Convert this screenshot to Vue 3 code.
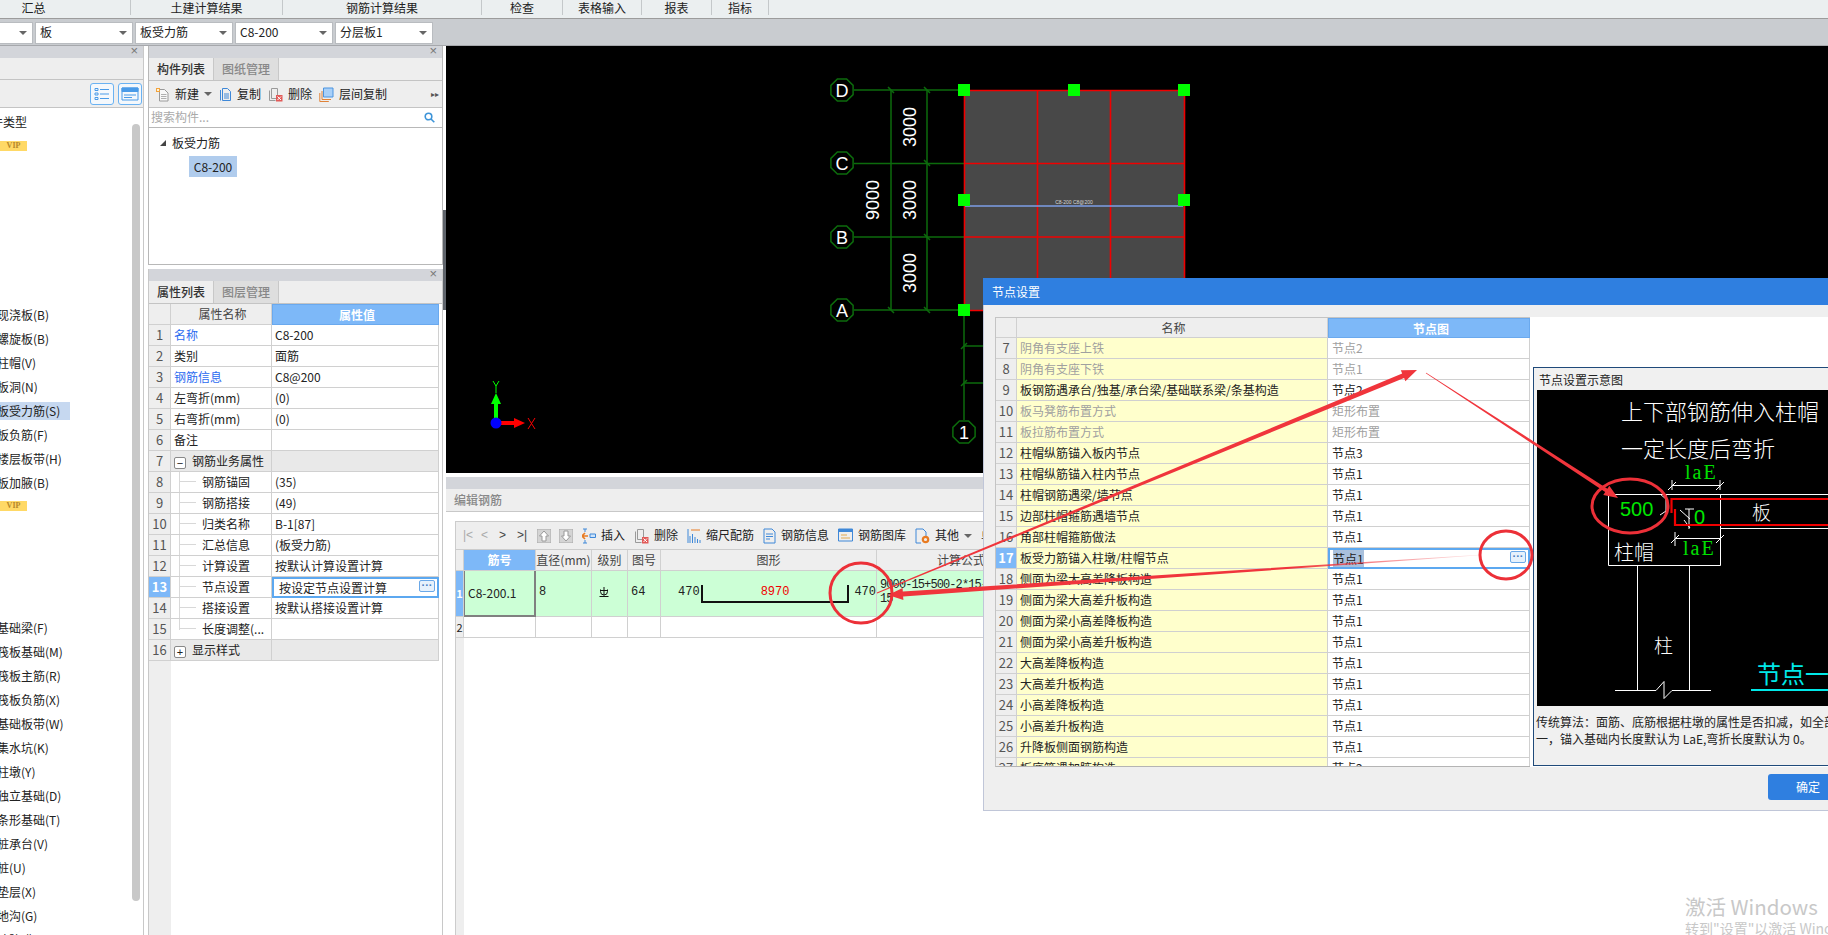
<template>
  <div class="app">
    <!-- 顶部菜单 -->
    <div class="menu-bar">
      <div v-for="m in menus" :key="m.label" class="menu-item" :style="{ width: m.w + 'px' }">{{ m.label }}</div>
    </div>

    <!-- 下拉框 -->
    <div class="combo-bar">
      <div v-for="c in combos" :key="c" class="combo">
        <span>{{ c }}</span><i class="caret"></i>
      </div>
    </div>

    <div class="workspace">
      <!-- 左侧导航树 -->
      <aside class="left-panel">
        <div class="panel-head"><span class="close">×</span></div>
        <div class="left-blank"></div>
        <div class="left-tools">
          <button class="view-btn">
            <svg width="16" height="14" viewBox="0 0 16 14" fill="none" stroke="#4a9be8">
              <path d="M1 1.5h3v2H1zM1 6h3v2H1zM1 10.500h3v2H1zM6 2.500h9M6 7h9M6 11.500h9" />
            </svg>
          </button>
          <button class="view-btn">
            <svg width="18" height="14" viewBox="0 0 18 14" fill="none" stroke="#4a9be8">
              <path d="M1 1h16v12H1z" /><path d="M1 1h16v3.500H1z" fill="#4a9be8" /><path d="M3 8h12M3 10.500h8" />
            </svg>
          </button>
        </div>
        <div class="left-list">
          <div class="nav-head">构件类型</div>
          <div class="vip">VIP</div>
          <div class="nav-group first">
            <div v-for="n in navSlab" :key="n" class="nav-item" :class="{ on: n === '板受力筋(S)' }">{{ n }}</div>
            <div class="vip inner">VIP</div>
          </div>
          <div class="nav-group second">
            <div v-for="n in navBase" :key="n" class="nav-item">{{ n }}</div>
          </div>
          <div class="scroll-thumb"></div>
        </div>
      </aside>

      <div class="mid-col">
        <!-- 构件列表 -->
        <section class="side-panel comp-panel">
          <div class="panel-head"><span class="close">×</span></div>
          <div class="tabs">
            <div class="tab on">构件列表</div>
            <div class="tab">图纸管理</div>
          </div>
          <div class="comp-tools">
            <span class="tool">
              <svg width="15" height="15" viewBox="0 0 15 15" fill="none"><path d="M4.500 2.500h5l3.500 3.500v8h-8.500z" stroke="#9a9a9a" fill="#f8f8f8" /><path d="M6 7.500h5.500M6 9.500h5.500M6 11.500h5.500" stroke="#b0b0b0" /><path d="M1 1h4v4H1z" fill="#f2a33c" /><path d="M2 2h2v2H2z" fill="#fff3d8" /></svg>
              新建<i class="caret small"></i>
            </span>
            <span class="tool">
              <svg width="13" height="15" viewBox="0 0 13 15" fill="none" stroke="#3f88d8"><path d="M3.500 1.500h5l3 3v9h-8z" /><path d="M1.500 3v10.500M5 7h5M5 9h5M5 11h5" /></svg>
              复制
            </span>
            <span class="tool">
              <svg width="15" height="15" viewBox="0 0 15 15" fill="none"><path d="M3.500 1.500h6v10h-6z M1.500 3.500v10h6" stroke="#9a9a9a" /><path d="M8 8h6.500v6.500H8z" fill="#e25a58" /><path d="M9.500 9.500l3.500 3.500M13 9.500l-3.500 3.500" stroke="#fff" /></svg>
              删除
            </span>
            <span class="tool">
              <svg width="15" height="15" viewBox="0 0 15 15" fill="none"><path d="M4.500 1h9.500v9H4.500z" fill="#a9d0f8" stroke="#4a94e0" /><path d="M3 4v8.500h9M.8 6v8.500h9" stroke="#e08238" /></svg>
              层间复制
            </span>
            <span class="more">▸▸</span>
          </div>
          <div class="search">
            <span>搜索构件...</span>
            <svg width="11" height="11" viewBox="0 0 11 11" fill="none" stroke="#3d94d8" stroke-width="1.600"><circle cx="4.500" cy="4.500" r="3.300" /><path d="M7 7l3.300 3.300" /></svg>
          </div>
          <div class="comp-tree">
            <div class="tree-root"><i class="tree-arrow"></i>板受力筋</div>
            <div class="tree-leaf">C8-200</div>
          </div>
        </section>

        <!-- 属性列表 -->
        <section class="side-panel prop-panel">
          <div class="panel-head"><span class="close">×</span></div>
          <div class="tabs">
            <div class="tab on">属性列表</div>
            <div class="tab">图层管理</div>
          </div>
          <div class="prop-row prop-top">
            <div class="p-num"></div>
            <div class="p-name head">属性名称</div>
            <div class="p-val head active">属性值</div>
          </div>
          <div v-for="(r, i) in props" :key="i" class="prop-row" :class="{ group: r.group }">
            <div class="p-num" :class="{ active: r.active }">{{ i + 1 }}</div>
            <div class="p-name" :class="{ link: r.link, sub: r.sub, last: i === 14 }">
              <i v-if="r.group" class="box">{{ r.group }}</i>{{ r.name }}
            </div>
            <div class="p-val" :class="{ editing: r.active }">
              {{ r.val }}
              <i v-if="r.active" class="dots">···</i>
            </div>
          </div>
          <div class="prop-rest"><div class="p-num"></div></div>
        </section>
      </div>

      <div class="splitter"><i></i></div>

      <main class="right-col">
        <!-- CAD 画布 -->
        <svg class="canvas" viewBox="446 46 1382 427" width="1382" height="427" font-family="Liberation Sans, sans-serif">
          <rect x="964" y="90" width="220" height="220" fill="#484848" />
          <g stroke="#0c6b0c" stroke-width="1.500" fill="none">
            <path d="M854 90h110M854 163.500h110M854 237h110M854 310h110M891 90v220M927 90v220M964 310v110M964 346h20M964 383h20" />
            <path d="M888 87l6 6M924 87l6 6M924 160l6 6M924 234l6 6M888 307l6 6M924 307l6 6M961 349l6-6M961 386l6-6" />
            <polygon v-for="a in axes" :key="a.t" :points="octagon(a.x, a.y, 12)" />
          </g>
          <g fill="#fff" font-size="18" text-anchor="middle">
            <text v-for="a in axes" :key="a.t" :x="a.x" :y="a.y + 6.500">{{ a.t }}</text>
            <text v-for="d in dims" :key="d.y + d.t" :transform="'translate(' + d.x + ' ' + d.y + ') rotate(-90)'">{{ d.t }}</text>
          </g>
          <path d="M964.500 90.500h220v220h-220zM964.500 163.500h220M964.500 237h220M1037.500 90v220M1110.500 90v220" fill="none" stroke="#f00000" stroke-width="1.600" />
          <path d="M965 206h218" stroke="#7d9ee6" stroke-width="1.500" />
          <text x="1074" y="204" fill="#d8d8d8" font-size="5" text-anchor="middle">C8-200 C8@200</text>
          <rect v-for="h in handles" :key="h[0] + '-' + h[1]" :x="h[0] - 6" :y="h[1] - 6" width="12" height="12" fill="#00ff00" />
          <!-- 坐标轴 -->
          <path d="M496 423v-24" stroke="#00ff00" stroke-width="4" />
          <path d="M496 393l5 11h-10z" fill="#00ff00" />
          <path d="M496 423h22" stroke="#ff0000" stroke-width="4" />
          <path d="M525 423l-11 5v-10z" fill="#ff0000" />
          <circle cx="496" cy="423" r="5.500" fill="#0000ff" />
          <path d="M493 381l3 5 3-5M496 386v7" stroke="#00ff00" fill="none" />
          <path d="M528 418l7 11M535 418l-7 11" stroke="#ff0000" fill="none" />
        </svg>

        <!-- 编辑钢筋 -->
        <section class="edit-panel">
          <div class="panel-head"></div>
          <div class="edit-title">编辑钢筋</div>
          <div class="edit-body">
            <div class="edit-tools">
              <span class="nav-ctl">|&lt;</span>
              <span class="nav-ctl">&lt;</span>
              <span class="nav-ctl dark">&gt;</span>
              <span class="nav-ctl dark">&gt;|</span>
              <svg class="t-up" width="14" height="14" viewBox="0 0 14 14"><rect width="14" height="14" fill="#d4d4d4" stroke="#aaa" /><path d="M7 2l4.500 5H9v5H5V7H2.500z" fill="#fff" stroke="#999" /></svg>
              <svg class="t-down" width="14" height="14" viewBox="0 0 14 14"><rect width="14" height="14" fill="#d4d4d4" stroke="#aaa" /><path d="M7 12l4.500-5H9V2H5v5H2.500z" fill="#fff" stroke="#999" /></svg>
              <span class="tool t-first">
                <svg width="14" height="16" viewBox="0 0 14 16" fill="none"><path d="M1 1h4M1 15h4M3 1v3M3 12v3" stroke="#3f88d8" /><path d="M0 8h6M3 5L0 8l3 3" stroke="#e87b22" stroke-width="1.600" /><path d="M8 6h5.500v3.500H8z" stroke="#3f88d8" fill="#cfe4fa" /></svg>
                插入
              </span>
              <span class="tool">
                <svg width="15" height="16" viewBox="0 0 15 16" fill="none"><path d="M3.500 1.500h6v10h-6z M1.500 3.500v11h6" stroke="#9a9a9a" /><path d="M8 9h6.500v6.500H8z" fill="#e25a58" /><path d="M9.500 10.500l3.500 3.500M13 10.500l-3.500 3.500" stroke="#fff" /></svg>
                删除
              </span>
              <span class="tool">
                <svg width="14" height="16" viewBox="0 0 14 16" fill="none" stroke="#3f88d8"><path d="M1 1v14M3 15V8M5.500 15V6M8 15V9M10.500 15v-4M13 15v-3" /><path d="M4 2h9" stroke="#e87b22" /></svg>
                缩尺配筋
              </span>
              <span class="tool">
                <svg width="13" height="16" viewBox="0 0 13 16" fill="none" stroke="#3f88d8"><path d="M1 1h8l3 3v11H1z" /><path d="M3 6h7M3 8.500h7M3 11h4" /></svg>
                钢筋信息
              </span>
              <span class="tool">
                <svg width="15" height="14" viewBox="0 0 15 14" fill="none"><path d="M.5 1h14v12H.5z" stroke="#3f88d8" /><path d="M.5 1h14v3H.5z" fill="#3f88d8" /><path d="M3 7h6M3 10h9" stroke="#e0a850" /></svg>
                钢筋图库
              </span>
              <span class="tool">
                <svg width="15" height="16" viewBox="0 0 15 16" fill="none"><path d="M1 1h7l3 3v5M6 15H1V1" stroke="#3f88d8" /><circle cx="10.500" cy="11.500" r="2.700" stroke="#e87b22" stroke-width="2.200" /></svg>
                其他<i class="caret small"></i>
              </span>
              <span class="tool cut">单</span>
            </div>
            <div class="rb-row rb-head">
              <div class="c-n"></div>
              <div class="c-id active">筋号</div>
              <div class="c-d">直径(mm)</div>
              <div class="c-g">级别</div>
              <div class="c-t">图号</div>
              <div class="c-s">图形</div>
              <div class="c-f center">计算公式</div>
            </div>
            <div class="rb-row rb-first">
              <div class="c-n active">1</div>
              <div class="c-id focus">C8-200.1</div>
              <div class="c-d top">8</div>
              <div class="c-g top grade-cell">
                <svg width="10" height="10" viewBox="0 0 10 10" fill="none" stroke="#111"><path d="M1.500 2.500v2a3.500 3.500 0 0 0 7 0v-2M5 0v8.500M.5 9.500h9M1.500 3.500h7" /></svg>
              </div>
              <div class="c-t top">64</div>
              <div class="c-s shape">
                <span class="len-l">470</span>
                <div class="bar"><span>8970</span></div>
                <span class="len-r">470</span>
              </div>
              <div class="c-f formula">9000-15+500-2*15-<br />15</div>
            </div>
            <div class="rb-row rb-empty">
              <div class="c-n">2</div>
              <div class="c-id"></div>
              <div class="c-d"></div>
              <div class="c-g"></div>
              <div class="c-t"></div>
              <div class="c-s"></div>
              <div class="c-f"></div>
            </div>
            <div class="rb-rest"></div>
          </div>
        </section>
      </main>
    </div>

    <!-- 节点设置弹窗 -->
    <div class="dialog">
      <div class="dlg-title">节点设置</div>
      <div class="dlg-main">
        <div class="node-table">
          <div class="node-row node-head">
            <div class="n-num"></div>
            <div class="n-name">名称</div>
            <div class="n-val active">节点图</div>
          </div>
          <div v-for="r in nodes" :key="r.no" class="node-row" :class="{ dim: r.dim }">
            <div class="n-num" :class="{ active: r.no === 17 }">{{ r.no }}</div>
            <div class="n-name">{{ r.name }}</div>
            <div class="n-val" :class="{ editing: r.no === 17 }">
              <span :class="{ sel: r.no === 17 }">{{ r.val }}</span>
              <i v-if="r.no === 17" class="dots">···</i>
            </div>
          </div>
        </div>
        <div class="dlg-right">
          <div class="preview">
            <div class="preview-title">节点设置示意图</div>
            <svg class="preview-img" viewBox="1537 390 291 316" width="291" height="316" font-family="Noto Sans CJK SC, sans-serif">
              <rect x="1537" y="390" width="291" height="316" fill="#000" />
              <g fill="#fff" font-size="22" font-weight="300">
                <text x="1621" y="420">上下部钢筋伸入柱帽</text>
                <text x="1621" y="457">一定长度后弯折</text>
                <text x="1752" y="520" font-size="19">板</text>
                <text x="1614" y="560" font-size="20">柱帽</text>
                <text x="1654" y="653" font-size="19">柱</text>
              </g>
              <g fill="#00e000" font-family="Liberation Serif, serif" font-size="20" letter-spacing="2">
                <text x="1685" y="479">laE</text>
                <text x="1683" y="555">laE</text>
              </g>
              <g fill="#00e800" font-family="Liberation Sans, sans-serif" font-size="20">
                <text x="1620" y="516">500</text>
                <text x="1694" y="524">0</text>
              </g>
              <g fill="none" stroke="#fff">
                <path d="M1608.500 494.500h219.500M1720.500 528.500h107.500M1608.500 494.500v71h112v-71M1637.500 565v125M1689.500 565v125M1615 690.500h41l8-9v17l8-8h39" />
                <path d="M1672 485.500h48M1672 480v10M1720 480v10M1668 490l8-8M1716 490l8-8M1675 538.500h45M1675 532v14M1671 543l8-8M1716 543l8-8" />
                <path d="M1666 494.500v20M1660 494l6 5 0 0M1660 515l6-4M1685 509h9M1689 509v20M1680 510l10 9M1684 520l6 8" />
              </g>
              <path d="M1671.500 513v-14h157M1675 509v16h153" fill="none" stroke="#f00000" stroke-width="2.200" />
              <g fill="#00e8e8" font-size="24">
                <text x="1757" y="683">节点一</text>
              </g>
              <path d="M1751 690h77" stroke="#00e8e8" stroke-width="2" />
            </svg>
            <p class="preview-note">传统算法：面筋、底筋根据柱墩的属性是否扣减，如全部<br />一，锚入基础内长度默认为 LaE,弯折长度默认为 0。</p>
          </div>
        </div>
      </div>
      <div class="dlg-foot"><button class="ok">确定</button></div>
    </div>

    <!-- 红色标注 -->
    <svg class="annot" viewBox="0 0 1828 935" width="1828" height="935">
      <defs>
        <linearGradient id="fade" gradientUnits="userSpaceOnUse" x1="1480" y1="0" x2="1290" y2="0">
          <stop offset="0" stop-color="#f0353c" stop-opacity="0.1" />
          <stop offset="1" stop-color="#f0353c" />
        </linearGradient>
      </defs>
      <polygon v-for="(a, i) in arrows" :key="i" :points="arrowPoints(a)" :fill="a.fade ? 'url(#fade)' : '#f0353c'" />
      <ellipse v-for="(c, i) in rings" :key="i" :cx="c[0]" :cy="c[1]" :rx="c[2]" :ry="c[3]" fill="none" stroke="#ec3038" stroke-width="3" />
    </svg>

    <div class="watermark">
      <div class="wm-1">激活 Windows</div>
      <div class="wm-2">转到"设置"以激活 Windows。</div>
    </div>
  </div>
</template>

<script setup>
const menus = [
  { label: '汇总', w: 194 },
  { label: '土建计算结果', w: 152 },
  { label: '钢筋计算结果', w: 199 },
  { label: '检查', w: 81 },
  { label: '表格输入', w: 79 },
  { label: '报表', w: 70 },
  { label: '指标', w: 57 }
]
const combos = ['首层', '板', '板受力筋', 'C8-200', '分层板1']

const navSlab = ['现浇板(B)', '螺旋板(B)', '柱帽(V)', '板洞(N)', '板受力筋(S)', '板负筋(F)', '楼层板带(H)', '板加腋(B)']
const navBase = ['基础梁(F)', '筏板基础(M)', '筏板主筋(R)', '筏板负筋(X)', '基础板带(W)', '集水坑(K)', '柱墩(Y)', '独立基础(D)', '条形基础(T)', '桩承台(V)', '桩(U)', '垫层(X)', '地沟(G)', '砖胎膜']

const props = [
  { name: '名称', val: 'C8-200', link: true },
  { name: '类别', val: '面筋' },
  { name: '钢筋信息', val: 'C8@200', link: true },
  { name: '左弯折(mm)', val: '(0)' },
  { name: '右弯折(mm)', val: '(0)' },
  { name: '备注', val: '' },
  { name: '钢筋业务属性', val: '', group: '−' },
  { name: '钢筋锚固', val: '(35)', sub: true },
  { name: '钢筋搭接', val: '(49)', sub: true },
  { name: '归类名称', val: 'B-1[87]', sub: true },
  { name: '汇总信息', val: '(板受力筋)', sub: true },
  { name: '计算设置', val: '按默认计算设置计算', sub: true },
  { name: '节点设置', val: '按设定节点设置计算', sub: true, active: true },
  { name: '搭接设置', val: '按默认搭接设置计算', sub: true },
  { name: '长度调整(...', val: '', sub: true },
  { name: '显示样式', val: '', group: '+' }
]

const nodeNames = [
  ['阴角有支座上铁', '节点2', 1],
  ['阴角有支座下铁', '节点1', 1],
  ['板钢筋遇承台/独基/承台梁/基础联系梁/条基构造', '节点2'],
  ['板马凳筋布置方式', '矩形布置', 1],
  ['板拉筋布置方式', '矩形布置', 1],
  ['柱帽纵筋锚入板内节点', '节点3'],
  ['柱帽纵筋锚入柱内节点', '节点1'],
  ['柱帽钢筋遇梁/墙节点', '节点1'],
  ['边部柱帽箍筋遇墙节点', '节点1'],
  ['角部柱帽箍筋做法', '节点1'],
  ['板受力筋锚入柱墩/柱帽节点', '节点1'],
  ['侧面为梁大高差降板构造', '节点1'],
  ['侧面为梁大高差升板构造', '节点1'],
  ['侧面为梁小高差降板构造', '节点1'],
  ['侧面为梁小高差升板构造', '节点1'],
  ['大高差降板构造', '节点1'],
  ['大高差升板构造', '节点1'],
  ['小高差降板构造', '节点1'],
  ['小高差升板构造', '节点1'],
  ['升降板侧面钢筋构造', '节点1'],
  ['板底筋遇加腋构造', '节点2']
]
const nodes = nodeNames.map((n, i) => ({ no: i + 7, name: n[0], val: n[1], dim: !!n[2] }))

const axes = [
  { t: 'D', x: 842, y: 90 },
  { t: 'C', x: 842, y: 163 },
  { t: 'B', x: 842, y: 237 },
  { t: 'A', x: 842, y: 310 },
  { t: '1', x: 964, y: 432 }
]
const dims = [
  { t: '9000', x: 879, y: 200 },
  { t: '3000', x: 916, y: 127 },
  { t: '3000', x: 916, y: 200 },
  { t: '3000', x: 916, y: 273 }
]
const handles = [[964, 90], [1074, 90], [1184, 90], [964, 200], [1184, 200], [964, 310]]

function octagon(cx, cy, r) {
  const pts = []
  for (let i = 0; i < 8; i++) {
    const a = Math.PI / 8 + (i * Math.PI) / 4
    pts.push((cx + r * Math.cos(a)).toFixed(1) + ',' + (cy + r * Math.sin(a)).toFixed(1))
  }
  return pts.join(' ')
}

// 从细到粗的手绘箭头
const arrows = [
  { from: [877, 593], to: [1417, 370], w0: 1, w1: 5, head: 15, hw: 6 },
  { from: [1480, 555], to: [888, 595], w0: 0.6, w1: 5, head: 15, hw: 6, fade: true },
  { from: [1426, 373], to: [1618, 498], w0: 0.8, w1: 4, head: 14, hw: 5.500 }
]
const rings = [
  [861, 593, 31, 30],
  [1506, 555, 26, 24],
  [1630, 506, 38, 27]
]

function arrowPoints(a) {
  const dx = a.to[0] - a.from[0]
  const dy = a.to[1] - a.from[1]
  const len = Math.hypot(dx, dy)
  const ux = dx / len
  const uy = dy / len
  const nx = -uy
  const ny = ux
  const bx = a.to[0] - ux * a.head
  const by = a.to[1] - uy * a.head
  const p = [
    [a.from[0] + (nx * a.w0) / 2, a.from[1] + (ny * a.w0) / 2],
    [bx + (nx * a.w1) / 2, by + (ny * a.w1) / 2],
    [bx + nx * a.hw, by + ny * a.hw],
    a.to,
    [bx - nx * a.hw, by - ny * a.hw],
    [bx - (nx * a.w1) / 2, by - (ny * a.w1) / 2],
    [a.from[0] - (nx * a.w0) / 2, a.from[1] - (ny * a.w0) / 2]
  ]
  return p.map(q => q[0].toFixed(1) + ',' + q[1].toFixed(1)).join(' ')
}
</script>

<style>
html, body { margin: 0; background: #fff; }
</style>

<style scoped>
* { box-sizing: border-box; }
.app {
  position: relative;
  width: 1828px;
  height: 935px;
  overflow: hidden;
  background: #fff;
  color: #222;
  font: 12px/1.2 "Noto Sans CJK SC", "Liberation Sans", sans-serif;
}
i { font-style: normal; }

/* ---- 菜单 ---- */
.menu-bar {
  display: flex;
  height: 19px;
  margin-left: -63px;
  background: #ebeff0;
  border-bottom: 1px solid #9c9c9c;
}
.menu-item {
  height: 15px;
  line-height: 15px;
  text-align: center;
  border-right: 1px solid #c4c8ca;
}

/* ---- 下拉框 ---- */
.combo-bar {
  display: flex;
  gap: 2px;
  height: 27px;
  padding-top: 2.500px;
  margin-left: -65px;
  background: #c9ccd0;
  border-bottom: 1px solid #a6a8ac;
}
.combo {
  display: flex;
  align-items: center;
  justify-content: space-between;
  width: 98px;
  height: 22px;
  padding: 0 5px 0 4px;
  background: #fff;
  border: 1px solid #b9bcc0;
}
.caret {
  width: 0;
  height: 0;
  border: 4px solid transparent;
  border-top: 4px solid #666;
  border-bottom: 0;
}
.caret.small { display: inline-block; margin-left: 0; vertical-align: 2px; }

.workspace {
  display: flex;
  height: 889px;
}

/* ---- 面板公共 ---- */
.panel-head {
  position: relative;
  height: 12px;
  background: #d3d5da;
}
.close {
  position: absolute;
  right: 5px;
  top: -2px;
  font: 13px/14px "Liberation Sans", sans-serif;
  color: #777;
}

/* ---- 左侧 ---- */
.left-panel {
  width: 144px;
  margin-right: 4px;
  border-right: 1px solid #c8c8c8;
  display: flex;
  flex-direction: column;
}
.left-blank {
  height: 22px;
  background: #eee;
  border-bottom: 1px solid #c4c4c4;
}
.left-tools {
  display: flex;
  justify-content: flex-end;
  gap: 4px;
  height: 28px;
  padding: 3px 1px 0 0;
  background: #eee;
  border-bottom: 1px solid #c4c4c4;
}
.view-btn {
  display: flex;
  align-items: center;
  justify-content: center;
  width: 24px;
  height: 22px;
  padding: 0;
  background: #f4f8fc;
  border: 1px solid #6ab2f2;
  border-radius: 3px;
}
.left-list {
  position: relative;
  flex: 1;
  overflow: hidden;
}
.nav-head {
  margin: 5px 0 0 -21px;
  line-height: 18px;
}
.vip {
  width: 27px;
  height: 10px;
  margin-top: 10px;
  background: #ffd966;
  color: #b5872a;
  font: bold 8px/10px "Liberation Serif", serif;
  text-align: center;
}
.vip.inner { margin-top: 6px; }
.nav-group { margin-left: 0; }
.nav-group.first { margin-top: 152px; }
.nav-group.second { margin-top: 105px; }
.nav-item {
  width: 70px;
  height: 24px;
  line-height: 24px;
  margin-left: 0;
  padding-left: 0;
  text-indent: -3px;
  white-space: nowrap;
}
.nav-item.on {
  background: linear-gradient(#fff 3px, #c6d8f0 3px, #c6d8f0 21px, #fff 21px);
}
.scroll-thumb {
  position: absolute;
  left: 132px;
  top: 16px;
  width: 8px;
  height: 777px;
  background: #c8c8c8;
  border-radius: 4px;
}

/* ---- 中间列 ---- */
.mid-col {
  display: flex;
  flex-direction: column;
  gap: 4px;
  width: 295px;
}
.side-panel {
  width: 295px;
  border: 1px solid #b8b8b8;
  border-top: 0;
  background: #fff;
}
.comp-panel { height: 219px; }
.prop-panel { flex: 1; display: flex; flex-direction: column; border-bottom: 0; border-color: #c8c8c8; }
.tabs {
  display: flex;
  height: 23px;
  padding-top: 0;
  background: #eee;
  border-bottom: 1px solid #c4c4c4;
}
.tab {
  width: 65px;
  line-height: 22px;
  text-align: center;
  color: #888;
  background: #dedede;
  border-right: 1px solid #c8c8c8;
  font-weight: 500;
}
.tab.on { background: #eee; color: #333; }

.comp-tools {
  display: flex;
  align-items: center;
  gap: 7px;
  height: 27px;
  padding-left: 6px;
  background: #eee;
  border-bottom: 1px solid #c4c4c4;
  position: relative;
}
.tool {
  display: inline-flex;
  align-items: center;
  gap: 5px;
  white-space: nowrap;
}
.more {
  position: absolute;
  right: 3px;
  font-size: 8px;
  color: #555;
}
.search {
  display: flex;
  align-items: center;
  justify-content: space-between;
  height: 20px;
  padding: 0 7px 0 2px;
  color: #aaa;
  border-bottom: 1px solid #b8b8b8;
}
.comp-tree { padding-top: 5px; }
.tree-root {
  position: relative;
  padding-left: 23px;
  line-height: 20px;
}
.tree-arrow {
  position: absolute;
  left: 11px;
  top: 7px;
  width: 0;
  height: 0;
  border-left: 6px solid transparent;
  border-bottom: 6px solid #444;
}
.tree-leaf {
  width: 48px;
  height: 21px;
  margin: 3px 0 0 40px;
  line-height: 21px;
  text-align: center;
  background: #b0cced;
}

/* ---- 属性表 ---- */
.prop-row {
  display: flex;
  height: 21px;
  flex: none;
}
.p-num {
  width: 22px;
  flex: none;
  text-align: center;
  line-height: 20px;
  font-size: 13px;
  color: #555;
  background: #eee;
  border-right: 1px solid #d0d0d0;
  border-bottom: 1px solid #d0d0d0;
}
.p-num.active { background: #7db8f8; color: #fff; font-weight: 700; }
.p-name {
  position: relative;
  width: 101px;
  padding-left: 3px;
  line-height: 20px;
  white-space: nowrap;
  overflow: hidden;
  border-right: 1px solid #d0d0d0;
  border-bottom: 1px solid #d0d0d0;
}
.p-val {
  position: relative;
  width: 167px;
  padding-left: 3px;
  line-height: 20px;
  border-right: 1px solid #d0d0d0;
  border-bottom: 1px solid #d0d0d0;
}
.head { text-align: center; background: #eee; color: #444; }
.head.active { background: #7db8f8; color: #fff; font-weight: 700; border: 1px solid #6aa9ee; }
.link { color: #2b6bf0; }
.sub { padding-left: 31px; }
.sub::before {
  content: "";
  position: absolute;
  left: 8px;
  top: -1px;
  bottom: -1px;
  border-left: 1px solid #d8d8d8;
}
.sub.last::before { bottom: 9px; }
.sub::after {
  content: "";
  position: absolute;
  left: 8px;
  top: 9px;
  width: 17px;
  border-top: 1px solid #d8d8d8;
}
.group .p-name, .group .p-val { background: #e9e9e9; }
.box {
  display: inline-block;
  width: 12px;
  height: 12px;
  margin-right: 6px;
  border: 1px solid #888;
  border-radius: 2px;
  background: #fff;
  font: 11px/10px "Liberation Sans", sans-serif;
  text-align: center;
  vertical-align: -1px;
}
.editing {
  padding-left: 5px;
  border: 2px solid #5ca8f0;
  line-height: 17px;
}
.dots {
  position: absolute;
  right: 2px;
  top: 1px;
  width: 16px;
  height: 12px;
  border: 1px solid #6aa8e8;
  border-radius: 2px;
  background: #e6f1fc;
  color: #4a80c0;
  font: bold 11px/9px "Liberation Sans", sans-serif;
  text-align: center;
}
.prop-rest { flex: 1; display: flex; }
.prop-rest .p-num { border: 0; }

/* ---- 分隔条 ---- */
.splitter {
  width: 3px;
  padding-top: 164px;
}
.splitter i {
  display: block;
  height: 100px;
  background: #5f646b;
}

/* ---- 右侧 ---- */
.right-col {
  display: flex;
  flex-direction: column;
  gap: 4px;
  width: 1382px;
}
.canvas {
  display: block;
  flex: none;
  background: #000;
}
.edit-panel {
  flex: 1;
  display: flex;
  flex-direction: column;
  background: #fff;
}
.edit-title {
  height: 23px;
  padding-left: 8px;
  line-height: 21px;
  color: #888;
  background: #eee;
  border-bottom: 1px solid #c8c8c8;
  font-weight: 500;
}
.edit-body {
  flex: 1;
  display: flex;
  flex-direction: column;
  margin: 9px 0 0 9px;
  border-left: 1px solid #ccc;
  border-top: 1px solid #ccc;
}
.edit-tools {
  display: flex;
  align-items: center;
  height: 28px;
  padding-left: 7px;
  background: #eee;
  border-bottom: 1px solid #ccc;
  white-space: nowrap;
}
.nav-ctl { width: 18px; color: #aaa; font-family: "Liberation Sans", sans-serif; }
.nav-ctl.dark { color: #444; }
.t-up { margin-left: 2px; }
.t-down { margin-left: 8px; }
.edit-tools .tool { margin-right: 9px; }
.t-first { margin-left: 9px; }
.cut { margin-right: 0; }

.rb-row { display: flex; flex: none; }
.rb-row > div {
  border-right: 1px solid #d0d0d0;
  border-bottom: 1px solid #d0d0d0;
}
.c-n {
  width: 8px;
  flex: none;
  overflow: hidden;
  background: #eee;
  text-align: center;
  font-size: 11px;
}
.c-id { width: 72px; flex: none; }
.c-d { width: 56px; flex: none; }
.c-g { width: 36px; flex: none; }
.c-t { width: 33px; flex: none; }
.c-s { width: 216px; flex: none; }
.c-f { flex: 1; }
.rb-head { height: 21px; }
.rb-head > div {
  line-height: 20px;
  text-align: center;
  background: #eee;
  color: #444;
  white-space: nowrap;
}
.rb-head .c-f { text-align: left; padding-left: 60px; }
.rb-head .active { background: #7db8f8; color: #fff; font-weight: 700; }
.rb-first { height: 46px; background: #ccffd6; }
.rb-first .c-n.active { background: #7db8f8; color: #fff; font-weight: 700; line-height: 45px; }
.focus {
  padding-left: 3px;
  line-height: 44px;
  border-right: 2px solid #808080 !important;
  border-bottom: 2px solid #808080 !important;
  border-left: 1px solid #808080;
}
.top {
  padding: 14px 0 0 3px;
  font-family: "Liberation Mono", monospace;
  font-size: 12px;
  line-height: 14px;
}
.grade-cell { padding: 16px 0 0 7px; }
.grade-cell svg { display: block; }
.shape {
  display: flex;
  align-items: flex-start;
  font-family: "Liberation Mono", monospace;
  font-size: 12px;
  padding-top: 14px;
  line-height: 14px;
}
.len-l { margin-left: 17px; width: 23px; }
.bar {
  width: 150px;
  height: 18px;
  margin-right: 5px;
  border: 2px solid #111;
  border-top: 0;
  text-align: center;
  color: #f00000;
}
.bar span { display: block; margin-top: 0; }
.formula {
  padding: 7px 0 0 3px;
  font: 12px/14px "Liberation Mono", monospace;
  letter-spacing: -0.9px;
}
.rb-empty { height: 21px; }
.rb-empty > div { overflow: hidden; }
.rb-empty .c-n { line-height: 20px; }
.rb-rest {
  flex: 1;
  width: 8px;
  background: #eee;
}

/* ---- 弹窗 ---- */
.dialog {
  position: absolute;
  left: 983px;
  top: 278px;
  width: 845px;
  height: 533px;
  background: #efefef;
  border: 1px solid #c0c6d8;
  border-top: 0;
  border-right: 0;
}
.dlg-title {
  height: 27px;
  margin-left: -1px;
  padding-left: 9px;
  line-height: 27px;
  background: #2f7fe0;
  color: #fff;
}
.dlg-main {
  display: flex;
  height: 450px;
  margin-top: 12px;
  padding-left: 11px;
}
.node-table {
  width: 535px;
  flex: none;
  overflow: hidden;
  border-top: 1px solid #c4c4c4;
  border-bottom: 1px solid #b4b4b4;
  border-left: 1px solid #c4c4c4;
}
.node-row { display: flex; height: 21px; }
.node-head { height: 20px; }
.n-num {
  width: 21px;
  flex: none;
  line-height: 20px;
  text-align: center;
  font-size: 13px;
  color: #555;
  background: #eee;
  border-right: 1px solid #d0d0d0;
  border-bottom: 1px solid #d0d0d0;
}
.n-num.active { background: #7db8f8; color: #fff; font-weight: 700; }
.n-name {
  width: 311px;
  flex: none;
  padding-left: 3px;
  line-height: 20px;
  background: #ffffcc;
  border-right: 1px solid #d0d0d0;
  border-bottom: 1px solid #d0d0d0;
  white-space: nowrap;
}
.n-val {
  position: relative;
  flex: 1;
  padding-left: 4px;
  line-height: 20px;
  background: #fff;
  border-right: 1px solid #d0d0d0;
  border-bottom: 1px solid #d0d0d0;
}
.node-head .n-name { background: #eee; text-align: center; color: #444; }
.node-head .n-val.active {
  background: #7db8f8;
  color: #fff;
  text-align: center;
  font-weight: 700;
  border: 1px solid #6aa9ee;
}
.dim .n-name, .dim .n-val { color: #a0a0a0; }
.n-val.editing { padding-left: 3px; line-height: 17px; border: 2px solid #5ca8f0; }
.sel { display: inline-block; height: 17px; background: #a9c0dc; }
.dlg-right {
  flex: 1;
  padding: 50px 0 0 3px;
  background: #fff;
}
.preview {
  height: 399px;
  background: #f0f0f0;
  border: 1px solid #1f4a7a;
  border-right: 0;
}
.preview-title { height: 22px; padding: 4px 0 0 5px; line-height: 16px; }
.preview-img { display: block; margin-left: 3px; }
.preview-note {
  margin: 7px 0 0 2px;
  line-height: 17px;
  white-space: nowrap;
}
.dlg-foot {
  display: flex;
  justify-content: flex-end;
  padding-top: 7px;
}
.ok {
  width: 60px;
  height: 26px;
  padding: 0 0 0 20px;
  border: 0;
  border-radius: 3px 0 0 3px;
  background: #2f7fe0;
  color: #fff;
  font: inherit;
}

/* ---- 标注 ---- */
.annot {
  position: absolute;
  left: 0;
  top: 0;
  pointer-events: none;
}
.watermark {
  position: absolute;
  left: 1685px;
  top: 893px;
  color: #c8c8c8;
  white-space: nowrap;
}
.wm-1 { font-size: 20.500px; line-height: 26px; }
.wm-2 { font-size: 14px; line-height: 19px; }
</style>
